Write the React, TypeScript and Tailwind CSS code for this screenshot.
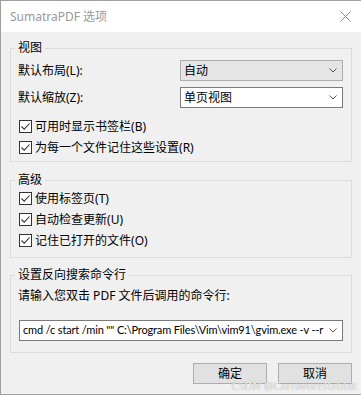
import React from "react";

const Chevron: React.FC = () => (
  <svg width="8" height="5" viewBox="0 0 8 5" className="shrink-0">
    <path d="M0.5 0.5 L4 4 L7.5 0.5" fill="none" stroke="#555" strokeWidth="1" />
  </svg>
);

const CheckBox: React.FC<{ label: string; hotkey: string }> = ({ label, hotkey }) => (
  <div className="flex h-[21px] items-center">
    <div className="ml-[1px] flex h-[13px] w-[13px] items-center justify-center border border-[#333] bg-white">
      <svg width="11" height="11" viewBox="0 0 11 11">
        <path d="M1.5 5.5 L4.2 8.2 L9.5 2.5" fill="none" stroke="#333" strokeWidth="1.1" />
      </svg>
    </div>
    <span className="ml-[3px]">
      {label}({hotkey})
    </span>
  </div>
);

const Combo: React.FC<{
  value: string;
  disabled?: boolean;
  className?: string;
  textClass?: string;
}> = ({ value, disabled, className = "", textClass = "" }) => (
  <div
    className={
      "flex h-[21px] items-center overflow-hidden border pl-[3px] pr-[5px] " +
      (disabled ? "border-[#adadad] bg-[#e5e5e5] " : "border-[#7a7a7a] bg-white ") +
      className
    }
  >
    <span className={"min-w-0 flex-1 overflow-hidden whitespace-nowrap " + textClass}>{value}</span>
    <Chevron />
  </div>
);

const Group: React.FC<{ title: string; className?: string; children: React.ReactNode }> = ({
  title,
  className = "",
  children,
}) => (
  <fieldset className={"min-w-0 border border-[#dcdcdc] pl-[7px] pr-[8px] " + className}>
    <legend className="-ml-[3px] px-[3px] leading-4">{title}</legend>
    {children}
  </fieldset>
);

export default function App() {
  return (
    <div className="relative h-[396px] w-[361px] overflow-hidden bg-white text-[12px] text-black [font-family:'Noto_Sans','Noto_Sans_CJK_SC',sans-serif]">
      <div className="flex h-[395px] flex-col border-b border-l border-t border-[#9f9f9f] bg-[#f0f0f0]">
        <div className="flex h-[31px] shrink-0 items-center justify-between bg-white pl-[9px] pr-[10px] text-[#999]">
          <span>SumatraPDF 选项</span>
          <svg width="11" height="11" viewBox="0 0 11 11">
            <path d="M0.5 0.5 L10.5 10.5 M10.5 0.5 L0.5 10.5" stroke="#888" strokeWidth="1" />
          </svg>
        </div>

        <div className="flex flex-col px-[9px] pt-[8px]">
          <Group title="视图" className="pb-[3px] pt-[4px]">
            <div className="flex items-center">
              <span>默认布局(L):</span>
              <Combo value="自动" disabled className="ml-auto w-[163px]" />
            </div>
            <div className="mt-[6px] flex items-center">
              <span>默认缩放(Z):</span>
              <Combo value="单页视图" className="ml-auto w-[163px]" />
            </div>
            <div className="mt-[8px]">
              <CheckBox label="可用时显示书签栏" hotkey="B" />
              <CheckBox label="为每一个文件记住这些设置" hotkey="R" />
            </div>
          </Group>

          <Group title="高级" className="mt-[10px] pb-[6px]">
            <CheckBox label="使用标签页" hotkey="T" />
            <CheckBox label="自动检查更新" hotkey="U" />
            <CheckBox label="记住已打开的文件" hotkey="O" />
          </Group>

          <Group title="设置反向搜索命令行" className="mt-[9px] pb-[11px] pt-[3px]">
            <div className="flex h-[20px] items-center">请输入您双击 PDF 文件后调用的命令行:</div>
            <Combo
              value={'cmd /c start /min "" C:\\Program Files\\Vim\\vim91\\gvim.exe -v --r'}
              className="ml-[1px] mt-[14px]"
              textClass="text-[11px] tracking-[-0.15px] [font-family:'Lato','Noto_Sans',sans-serif]"
            />
          </Group>

          <div className="mt-[10px] flex justify-end gap-[11px]">
            <button className="h-[21px] w-[74px] border border-[#adadad] bg-[#e1e1e1]">确定</button>
            <button className="h-[21px] w-[74px] border border-[#adadad] bg-[#e1e1e1]">取消</button>
          </div>
        </div>
      </div>

      <span className="absolute right-[4px] top-[378px] text-[11px] text-[#f4f4f4] [text-shadow:0_0_1px_#8a8a8a]">
        CSDN @CarnivoreRabbit
      </span>
    </div>
  );
}
